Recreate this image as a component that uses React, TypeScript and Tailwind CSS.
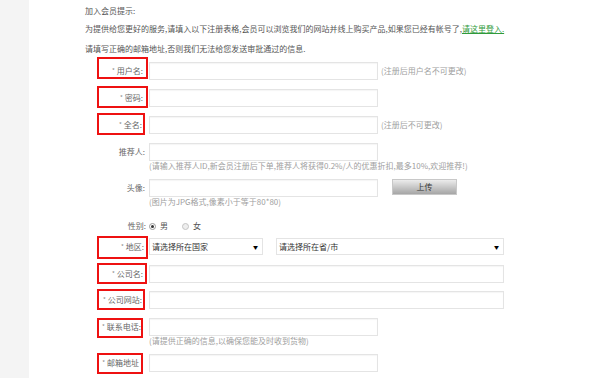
import React from 'react';

type FieldProps = {
  label: string;
  required?: boolean;
  rowClass: string;
  labelPad: string;
  box?: string;
  children: React.ReactNode;
};

function Field({ label, required, rowClass, labelPad, box, children }: FieldProps) {
  return (
    <div className={`flex items-start ${rowClass}`}>
      <div className={`relative w-[52px] shrink-0 text-right leading-[12px] text-[#666] ${labelPad}`}>
        {required && <span className="mr-[2px] align-top text-[6px] text-[#888]">*</span>}
        {label}
        {box && <div className={`absolute left-0 top-0 border-2 border-[#ee1111] ${box}`} />}
      </div>
      {children}
    </div>
  );
}

function TextBox({ className }: { className: string }) {
  return (
    <input
      type="text"
      readOnly
      className={`block h-[18px] border border-[#e4e4e4] bg-white shadow-[inset_0_1px_1px_rgba(0,0,0,0.04)] outline-none ${className}`}
    />
  );
}

function Hint({ children, className = '' }: { children: React.ReactNode; className?: string }) {
  return <div className={`leading-[10px] text-[#a0a0a0] whitespace-nowrap ${className}`}>{children}</div>;
}

export default function App() {
  return (
    <div className="flex h-[381px] w-[612px] overflow-hidden bg-white font-['Noto_Sans_CJK_SC','Noto_Sans',sans-serif] text-[8px]">
      <div className="h-[378px] w-[29px] shrink-0 bg-[#f4f4f4]" />

      <div className="flex-1 pl-[56px]">
        <p className="mt-[5px] leading-[12px] text-[#555]">加入会员提示:</p>
        <p className="mt-[6px] whitespace-nowrap leading-[12px] text-[#555]">
          为提供给您更好的服务,请填入以下注册表格,会员可以浏览我们的网站并线上购买产品,如果您已经有帐号了,
          <a className="text-[#2f9a3a] underline">请这里登入.</a>
        </p>
        <p className="mt-[8px] leading-[12px] text-[#555]">请填写正确的邮箱地址,否则我们无法给您发送审批通过的信息.</p>

        <div className="ml-[12px]">
          <Field label="用户名:" required rowClass="mt-[2px]" labelPad="pt-[8px] pr-[6px]" box="w-[51px] h-[22px]">
            <TextBox className="mt-[5px] w-[229px]" />
            <span className="ml-[3px] pt-[8px] leading-[12px] text-[#a0a0a0]">(注册后用户名不可更改)</span>
          </Field>

          <Field label="密码:" required rowClass="mt-[6px]" labelPad="pt-[6px] pr-[6px]" box="w-[51px] h-[22px]">
            <TextBox className="mt-[3px] w-[229px]" />
          </Field>

          <Field label="全名:" required rowClass="mt-[6px]" labelPad="pt-[6px] pr-[7px]" box="w-[48px] h-[22px]">
            <TextBox className="mt-[3px] w-[229px]" />
            <span className="ml-[3px] pt-[6px] leading-[12px] text-[#a0a0a0]">(注册后不可更改)</span>
          </Field>

          <Field label="推荐人:" rowClass="mt-[9px]" labelPad="pt-[3px] pr-[4px]">
            <div>
              <TextBox className="w-[229px]" />
              <Hint>(请输入推荐人ID,新会员注册后下单,推荐人将获得0.2%/人的优惠折扣,最多10%,欢迎推荐!)</Hint>
            </div>
          </Field>

          <Field label="头像:" rowClass="mt-[8px]" labelPad="pt-[3px] pr-[4px]">
            <div>
              <div className="flex items-start">
                <TextBox className="w-[229px]" />
                <button className="ml-[14px] h-[16px] w-[65px] border border-[#c8c8c8] bg-gradient-to-b from-[#ececec] to-[#a6a6a6] text-[8px] leading-[14px] text-[#333]">
                  上传
                </button>
              </div>
              <Hint>(图片为JPG格式,像素小于等于80*80)</Hint>
            </div>
          </Field>

          <Field label="性别:" rowClass="mt-[13px]" labelPad="pt-0 pr-[3px]">
            <div className="flex items-center leading-[12px] text-[#555]">
              <span className="flex h-[7px] w-[7px] items-center justify-center rounded-full border border-[#9a9a9a] bg-white">
                <span className="h-[3px] w-[3px] rounded-full bg-[#333]" />
              </span>
              <span className="ml-[4px]">男</span>
              <span className="ml-[14px] h-[7px] w-[7px] rounded-full border border-[#c4c4c4] bg-[#eee]" />
              <span className="ml-[4px]">女</span>
            </div>
          </Field>

          <Field label="地区:" required rowClass="mt-[4px]" labelPad="pt-[5px] pr-[5px]" box="w-[51px] h-[23px]">
            <div className="mt-[2px] flex h-[17px] w-[114px] items-center justify-between border border-[#e4e4e4] bg-white pl-[2px] pr-[4px] text-[#333]">
              <span>请选择所在国家</span>
              <span className="text-[5px] text-black">▼</span>
            </div>
            <div className="ml-[13px] mt-[2px] flex h-[17px] w-[228px] items-center justify-between border border-[#e4e4e4] bg-white pl-[2px] pr-[4px] text-[#333]">
              <span>请选择所在省/市</span>
              <span className="text-[5px] text-black">▼</span>
            </div>
          </Field>

          <Field label="公司名:" required rowClass="mt-[8px]" labelPad="pt-[5px] pr-[6px]" box="w-[50px] h-[21px]">
            <TextBox className="mt-[2px] w-[355px]" />
          </Field>

          <Field label="公司网站:" required rowClass="mt-[6px]" labelPad="pt-[5px] pr-[7px]" box="w-[48px] h-[21px]">
            <TextBox className="mt-[2px] w-[355px]" />
          </Field>

          <Field label="联系电话:" required rowClass="mt-[9px]" labelPad="pt-[3px] pr-[8px]" box="w-[46px] h-[20px]">
            <div>
              <TextBox className="w-[229px]" />
              <Hint>(请提供正确的信息,以确保您能及时收到货物)</Hint>
            </div>
          </Field>

          <Field label="邮箱地址" required rowClass="mt-[7px]" labelPad="pt-[4px] pr-[10px]" box="w-[46px] h-[21px]">
            <TextBox className="mt-[1px] w-[229px]" />
          </Field>
        </div>
      </div>
    </div>
  );
}
